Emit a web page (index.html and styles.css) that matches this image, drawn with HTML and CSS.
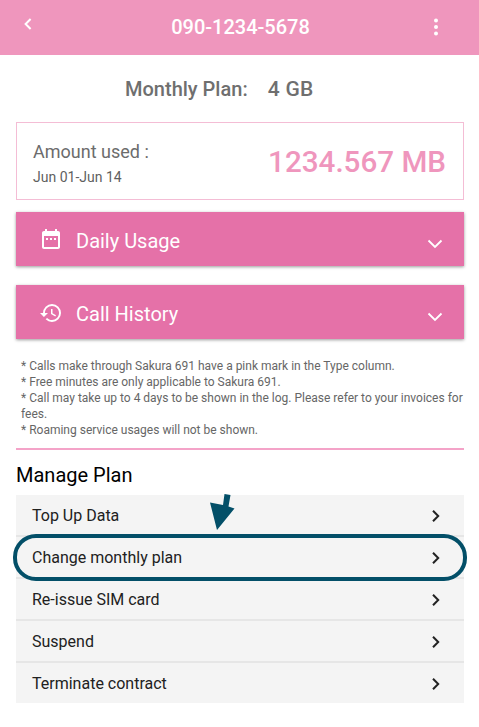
FILE: index.html
```html
<!DOCTYPE html>
<html lang="en">
<head>
    <meta charset="UTF-8">
    <meta name="viewport" content="width=device-width, initial-scale=1.0">
    <title>090-1234-5678</title>
    <link rel="stylesheet" href="styles.css">
</head>
<body>
    <header class="top-bar">
        <svg class="back-icon" width="12" height="14" viewBox="0 0 12 14"><path d="M8.600 2 L3.600 7 L8.600 12" fill="none" stroke="#fff" stroke-width="2"/></svg>
        <h1>090-1234-5678</h1>
        <svg class="more-icon" width="6" height="18" viewBox="0 0 6 18"><circle cx="3" cy="2.500" r="2"/><circle cx="3" cy="9" r="2"/><circle cx="3" cy="15.500" r="2"/></svg>
    </header>

    <main class="content">
        <div class="plan-line"><span>Monthly Plan:</span><span class="plan-size">4 GB</span></div>

        <div class="usage-box">
            <div class="usage-label">
                <div class="usage-title">Amount used :</div>
                <div class="usage-date">Jun 01-Jun 14</div>
            </div>
            <div class="usage-value">1234.567 MB</div>
        </div>

        <div class="panel-btn">
            <!-- calendar -->
            <svg class="panel-icon" width="24" height="24" viewBox="0 0 24 24" fill="#fff"><path d="M19 3h-1V1h-2v2H8V1H6v2H5c-1.100 0-2 .9-2 2v14c0 1.100.9 2 2 2h14c1.100 0 2-.9 2-2V5c0-1.100-.9-2-2-2zm0 16H5V8h14v11zM7 10h2v2H7zm4 0h2v2h-2zm4 0h2v2h-2z"/></svg>
            <span class="panel-text">Daily Usage</span>
            <svg class="chevron" width="18" height="12" viewBox="0 0 18 12"><path d="M2.500 2.500 L9 9 L15.500 2.500" fill="none" stroke="#fff" stroke-width="1.800"/></svg>
        </div>

        <div class="panel-btn">
            <!-- history -->
            <svg class="panel-icon" width="24" height="24" viewBox="0 0 24 24" fill="#fff"><path d="M13 3a9 9 0 0 0-9 9H1l3.890 3.890.07.14L9 12H6c0-3.870 3.130-7 7-7s7 3.130 7 7-3.130 7-7 7c-1.930 0-3.680-.79-4.940-2.060l-1.420 1.420A8.954 8.954 0 0 0 13 21a9 9 0 0 0 0-18zm-1 5v5l4.280 2.540.72-1.210-3.500-2.080V8H12z"/></svg>
            <span class="panel-text">Call History</span>
            <svg class="chevron" width="18" height="12" viewBox="0 0 18 12"><path d="M2.500 2.500 L9 9 L15.500 2.500" fill="none" stroke="#fff" stroke-width="1.800"/></svg>
        </div>

        <div class="notes">
            * Calls make through Sakura 691 have a pink mark in the Type column.<br>
            * Free minutes are only applicable to Sakura 691.<br>
            * Call may take up to 4 days to be shown in the log. Please refer to your invoices for fees.<br>
            * Roaming service usages will not be shown.
        </div>

        <h2 class="section-title">Manage Plan</h2>

        <div class="menu">
            <div class="menu-row"><span>Top Up Data</span><svg class="row-arrow" width="10" height="14" viewBox="0 0 10 14"><path d="M2 1.800 L7.200 7 L2 12.200" fill="none" stroke="#222" stroke-width="2"/></svg></div>
            <div class="menu-row"><span>Change monthly plan</span><svg class="row-arrow" width="10" height="14" viewBox="0 0 10 14"><path d="M2 1.800 L7.200 7 L2 12.200" fill="none" stroke="#222" stroke-width="2"/></svg>
                <div class="highlight"></div>
                <svg class="pointer" width="26" height="38" viewBox="0 0 26 38"><path d="M14.500 0 L20.500 1 L18.500 12.500 L24.500 14.500 L7 36 L0 8.500 L13 11 Z" fill="#034f68"/></svg>
            </div>
            <div class="menu-row"><span>Re-issue SIM card</span><svg class="row-arrow" width="10" height="14" viewBox="0 0 10 14"><path d="M2 1.800 L7.200 7 L2 12.200" fill="none" stroke="#222" stroke-width="2"/></svg></div>
            <div class="menu-row"><span>Suspend</span><svg class="row-arrow" width="10" height="14" viewBox="0 0 10 14"><path d="M2 1.800 L7.200 7 L2 12.200" fill="none" stroke="#222" stroke-width="2"/></svg></div>
            <div class="menu-row"><span>Terminate contract</span><svg class="row-arrow" width="10" height="14" viewBox="0 0 10 14"><path d="M2 1.800 L7.200 7 L2 12.200" fill="none" stroke="#222" stroke-width="2"/></svg></div>
        </div>
    </main>
</body>
</html>
```

FILE: styles.css
```css
* {
    margin: 0;
    padding: 0;
    box-sizing: border-box;
}

body {
    background: #ffffff;
    font-family: Roboto, sans-serif;
    color: #212121;
}

/* Top bar */
.top-bar {
    height: 55px;
    background: #ef96bd;
    color: #ffffff;
    display: flex;
    align-items: center;
    padding: 0 40px 0 22px;
}

.top-bar h1 {
    flex: 1;
    text-align: center;
    font-size: 20px;
    font-weight: 500;
    margin: 0 0 1px 14px;
}

.back-icon {
    margin-bottom: 8px;
}

.more-icon {
    fill: #ffffff;
    margin-bottom: 1px;
}

.content {
    padding: 0 15px 0 16px;
}

/* Plan summary */
.plan-line {
    display: flex;
    gap: 20px;
    height: 67px;
    padding: 22px 0 0 109px;
    font-size: 20px;
    font-weight: 500;
    line-height: 24px;
    color: #6f6f6f;
}

.plan-size {
    font-size: 21px;
    letter-spacing: 0.3px;
}

.usage-box {
    height: 78px;
    border: 1px solid #f4bdd5;
    display: flex;
    align-items: center;
    justify-content: space-between;
    padding: 0 17px 0 16px;
    margin-bottom: 12px;
}

.usage-label {
    margin-top: 3px;
}

.usage-title {
    font-size: 18px;
    line-height: 22px;
    color: #6c6c6c;
}

.usage-date {
    font-size: 14px;
    line-height: 16px;
    margin-top: 6px;
    color: #5f5f5f;
}

.usage-value {
    font-size: 29.6px;
    font-weight: 500;
    color: #ef96bd;
    margin-top: 1px;
}

/* Expand buttons */
.panel-btn {
    height: 54px;
    background: #e571a8;
    color: #ffffff;
    display: flex;
    align-items: center;
    padding: 0 20px 0 23px;
    margin-bottom: 19px;
    box-shadow: 0 1px 3px rgba(0, 0, 0, 0.4);
}

.panel-icon {
    flex: none;
    margin-top: 1px;
}

.panel-text {
    font-size: 20px;
    font-weight: 400;
    margin: 4px 0 0 13px;
    flex: 1;
}

.chevron {
    margin-top: 10px;
}

/* Notes */
.notes {
    font-size: 12px;
    line-height: 16px;
    color: #666666;
    padding-left: 5px;
    height: 92px;
    border-bottom: 2px solid #f4a3c8;
}

.section-title {
    font-size: 20px;
    font-weight: 400;
    line-height: 24px;
    color: #000000;
    margin-top: 13px;
    margin-bottom: 8px;
}

/* Manage plan list */
.menu {
    background: #f4f4f4;
}

.menu-row {
    position: relative;
    height: 42px;
    display: flex;
    align-items: center;
    justify-content: space-between;
    padding: 0 23px 0 16px;
    font-size: 16px;
    border-bottom: 2px solid #e6e6e6;
}

.menu-row:last-child {
    height: 40px;
    border-bottom: none;
}

.menu-row span {
    margin-top: 1px;
}

.row-arrow {
    margin-top: 1px;
}

/* Annotation drawn over the second row */
.highlight {
    position: absolute;
    left: -3px;
    right: -3px;
    top: -3px;
    height: 47px;
    border: 4px solid #034f68;
    border-radius: 23px;
}

.pointer {
    position: absolute;
    left: 194px;
    top: -43px;
}
```
